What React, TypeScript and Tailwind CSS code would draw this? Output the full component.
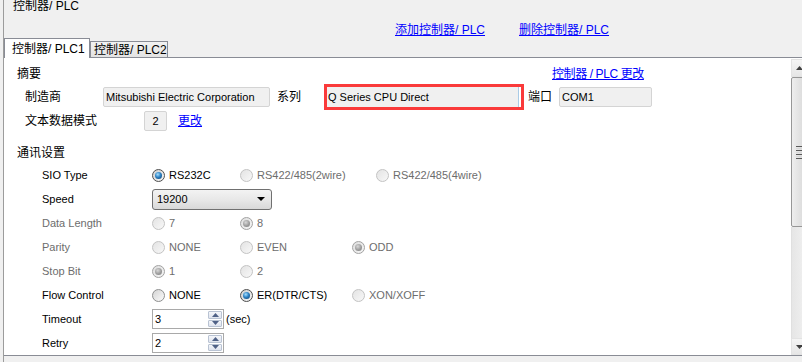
import React from 'react'

type RadioState = 'on' | 'off' | 'dis' | 'dison'

function Radio({ state }: { state: RadioState }) {
  if (state === 'on') {
    return (
      <span className="flex h-[13px] w-[13px] shrink-0 items-center justify-center rounded-full border border-[#4e4e4e] bg-linear-to-br from-[#cfcfcf] to-[#f6f6f6]">
        <span className="h-[7px] w-[7px] rounded-full bg-[radial-gradient(circle_at_40%_35%,#a6e0ff_0%,#2e82c4_45%,#0a3a68_100%)]" />
      </span>
    )
  }
  if (state === 'dison') {
    return (
      <span className="flex h-[13px] w-[13px] shrink-0 items-center justify-center rounded-full border border-[#a2a2a2] bg-linear-to-br from-[#dedede] to-[#f6f6f6]">
        <span className="h-[7px] w-[7px] rounded-full bg-[radial-gradient(circle_at_40%_35%,#d8d8d8_0%,#9c9c9c_55%,#7e7e7e_100%)]" />
      </span>
    )
  }
  if (state === 'off') {
    return (
      <span className="h-[13px] w-[13px] shrink-0 rounded-full border border-[#8e8f8f] bg-linear-to-br from-[#d4d4d4] to-[#fbfbfb]" />
    )
  }
  return (
    <span className="h-[13px] w-[13px] shrink-0 rounded-full border border-[#c3c3c3] bg-linear-to-br from-[#e3e3e3] to-[#f8f8f8]" />
  )
}

interface OptionProps {
  state: RadioState
  label: string
  width?: string
}

function Option({ state, label, width = '' }: OptionProps) {
  const off = state === 'dis' || state === 'dison'
  return (
    <div className={`flex shrink-0 items-center gap-[4px] ${width}`}>
      <Radio state={state} />
      <span className={off ? 'text-[#6d6d6d]' : 'text-black'}>{label}</span>
    </div>
  )
}

function Spin({ value }: { value: string }) {
  return (
    <div className="flex h-[20px] w-[72px] shrink-0 border border-[#a9a9a9] bg-white">
      <span className="flex-1 pl-[2px] leading-[18px]">{value}</span>
      <div className="flex w-[15px] flex-col gap-px py-px pr-px">
        <div className="flex flex-1 items-center justify-center rounded-[1px] border border-[#b9c3d3] bg-linear-to-b from-[#f4f6fa] to-[#dfe4ee]">
          <svg width="7" height="4" viewBox="0 0 7 4">
            <path d="M0 4 L3.5 0 L7 4 Z" fill="#4f6186" />
          </svg>
        </div>
        <div className="flex flex-1 items-center justify-center rounded-[1px] border border-[#b9c3d3] bg-linear-to-b from-[#f4f6fa] to-[#dfe4ee]">
          <svg width="7" height="4" viewBox="0 0 7 4">
            <path d="M0 0 L7 0 L3.5 4 Z" fill="#4f6186" />
          </svg>
        </div>
      </div>
    </div>
  )
}

function Row({ label, dim, children }: { label: string; dim?: boolean; children: React.ReactNode }) {
  return (
    <div className="flex h-[24px] shrink-0 items-center pl-[38px] text-[11px]">
      <span className={`w-[110px] shrink-0 ${dim ? 'text-[#6d6d6d]' : 'text-black'}`}>{label}</span>
      {children}
    </div>
  )
}

function Scrollbar() {
  return (
    <div className="flex w-[17px] shrink-0 flex-col pt-px">
      <div className="flex h-[18px] shrink-0 items-center justify-center border border-[#e3e3e3] bg-linear-to-b from-[#f5f5f5] to-[#e6e6e6]">
        <svg width="7" height="4" viewBox="0 0 7 4">
          <path d="M0 4 L3.5 0 L7 4 Z" fill="#404040" />
        </svg>
      </div>
      <div className="flex h-[150px] shrink-0 flex-col items-center justify-center gap-[1px] rounded-[2px] border border-[#979797] bg-linear-to-r from-[#eeeeee] to-[#d6d6d6]">
        <span className="h-px w-[7px] bg-[#5a5a5a]" />
        <span className="h-px w-[7px] bg-[#d8d8d8]" />
        <span className="h-px w-[7px] bg-[#5a5a5a]" />
        <span className="h-px w-[7px] bg-[#d8d8d8]" />
        <span className="h-px w-[7px] bg-[#5a5a5a]" />
        <span className="h-px w-[7px] bg-[#d8d8d8]" />
        <span className="h-px w-[7px] bg-[#5a5a5a]" />
      </div>
      <div className="flex-1 border-l border-[#e0e0e0] bg-linear-to-r from-[#e6e6e6] to-[#f2f2f2]" />
      <div className="flex h-[17px] shrink-0 items-center justify-center border border-[#e3e3e3] bg-linear-to-b from-[#f5f5f5] to-[#e6e6e6]">
        <svg width="7" height="4" viewBox="0 0 7 4">
          <path d="M0 0 L7 0 L3.5 4 Z" fill="#404040" />
        </svg>
      </div>
    </div>
  )
}

export default function App() {
  return (
    <div className="relative h-[362px] w-[802px] overflow-hidden bg-[#f0f0f0] font-['Liberation_Sans','Noto_Sans_CJK_SC',sans-serif] text-black">
      <div className="ml-[3px] flex h-full flex-col border-l border-[#9c9c9c]">
        {/* 标题 */}
        <div className="h-[12px] shrink-0 pl-[9px] text-[12px] leading-[12px]">控制器/ PLC</div>

        {/* 链接 */}
        <div className="mt-[11px] flex h-[14px] shrink-0 items-center pl-[391px] text-[12px] leading-[14px]">
          <a className="cursor-pointer text-[#0000ff] underline">添加控制器/ PLC</a>
          <a className="ml-[34px] cursor-pointer text-[#0000ff] underline">删除控制器/ PLC</a>
        </div>

        {/* 标签页 */}
        <div className="relative z-10 mt-px -mb-px flex h-[20px] shrink-0 items-start text-[12px]">
          <div className="flex h-[20px] w-[86px] items-center border border-b-0 border-[#898c95] bg-white pl-[7px]">
            控制器/ PLC1
          </div>
          <div className="mt-[3px] flex h-[16px] w-[78px] items-center border border-b-0 border-[#898c95] bg-linear-to-b from-[#f2f2f2] to-[#e3e3e3] pl-[3px]">
            控制器/ PLC2
          </div>
        </div>

        {/* 面板 */}
        <div className="flex h-[299px] shrink-0 overflow-hidden border-y border-[#898c95] bg-white">
          <div className="flex w-[787px] shrink-0 flex-col overflow-hidden">
            <div className="mt-[8px] flex h-[16px] shrink-0 items-center pl-[13px] text-[12px]">
              <span className="w-[535px] shrink-0">摘要</span>
              <a className="cursor-pointer tracking-[-0.4px] text-[#0000ff] underline">控制器 / PLC 更改</a>
            </div>

            <div className="mt-[2px] flex h-[26px] shrink-0 items-center pl-[21px] text-[12px]">
              <span className="w-[78px] shrink-0">制造商</span>
              <div className="flex h-[20px] w-[167px] shrink-0 items-center rounded-[2px] border border-[#d4d4d4] bg-[#f0f0f0] pl-[2px] text-[11px]">
                Mitsubishi Electric Corporation
              </div>
              <span className="ml-[7px] w-[47px] shrink-0">系列</span>
              <div className="flex h-[26px] w-[200px] shrink-0 items-center border-[3px] border-[#fa3a3a] bg-white">
                <div className="flex h-[20px] w-[192px] items-center border-r border-[#a9cbe6] bg-[#f0f0f0] pl-[1px] text-[11px]">
                  Q Series CPU Direct
                </div>
              </div>
              <span className="ml-[4px] w-[31px] shrink-0">端口</span>
              <div className="flex h-[20px] w-[93px] shrink-0 items-center rounded-[2px] border border-[#d4d4d4] bg-[#f0f0f0] pl-[2px] text-[11px]">
                COM1
              </div>
            </div>

            <div className="mt-px flex h-[20px] shrink-0 items-center pl-[21px] text-[12px]">
              <span className="w-[119px] shrink-0">文本数据模式</span>
              <div className="flex h-[20px] w-[23px] shrink-0 items-center justify-center rounded-[2px] border border-[#d4d4d4] bg-[#f0f0f0] text-[11px]">
                2
              </div>
              <a className="ml-[11px] cursor-pointer text-[#0000ff] underline">更改</a>
            </div>

            <div className="mt-[14px] flex h-[16px] shrink-0 items-center pl-[13px] text-[12px]">通讯设置</div>

            <div className="mt-[2px] flex flex-col">
              <Row label="SIO Type">
                <Option state="on" label="RS232C" width="w-[88px]" />
                <Option state="dis" label="RS422/485(2wire)" width="w-[136px]" />
                <Option state="dis" label="RS422/485(4wire)" />
              </Row>
              <Row label="Speed">
                <div className="flex h-[21px] w-[120px] shrink-0 items-center justify-between rounded-[3px] border border-[#707070] bg-linear-to-b from-[#f3f3f3] via-[#e8e8e8] to-[#d8d8d8] pl-[4px] pr-[6px]">
                  <span>19200</span>
                  <svg width="8" height="4" viewBox="0 0 8 4">
                    <path d="M0 0 L8 0 L4 4 Z" fill="#000" />
                  </svg>
                </div>
              </Row>
              <Row label="Data Length" dim>
                <Option state="dis" label="7" width="w-[88px]" />
                <Option state="dison" label="8" />
              </Row>
              <Row label="Parity" dim>
                <Option state="dis" label="NONE" width="w-[88px]" />
                <Option state="dis" label="EVEN" width="w-[112px]" />
                <Option state="dison" label="ODD" />
              </Row>
              <Row label="Stop Bit" dim>
                <Option state="dison" label="1" width="w-[88px]" />
                <Option state="dis" label="2" />
              </Row>
              <Row label="Flow Control">
                <Option state="off" label="NONE" width="w-[88px]" />
                <Option state="on" label="ER(DTR/CTS)" width="w-[112px]" />
                <Option state="dis" label="XON/XOFF" />
              </Row>
              <Row label="Timeout">
                <Spin value="3" />
                <span className="ml-[2px]">(sec)</span>
              </Row>
              <Row label="Retry">
                <Spin value="2" />
              </Row>
            </div>
          </div>
          <Scrollbar />
        </div>
      </div>
    </div>
  )
}
